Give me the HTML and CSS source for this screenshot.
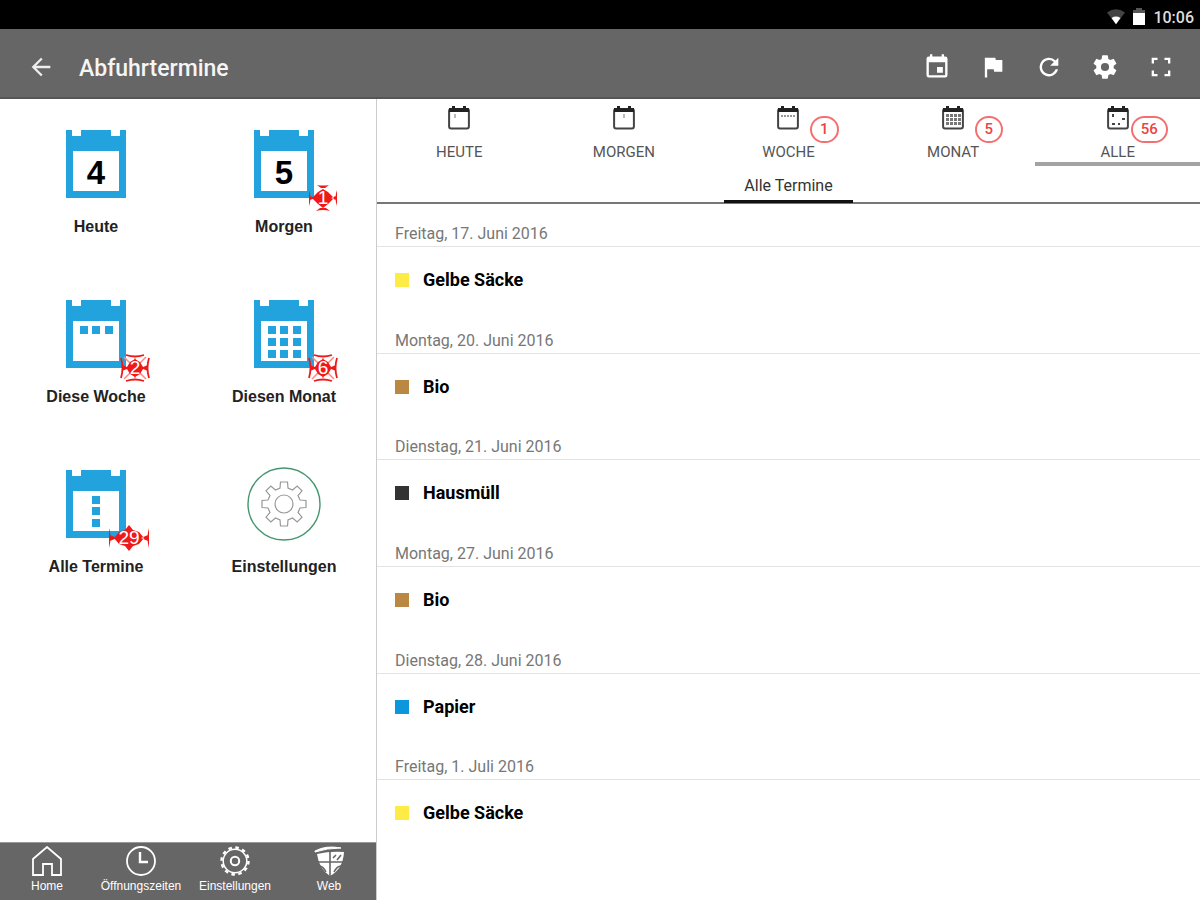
FILE: index.html
```html
<!DOCTYPE html>
<html lang="de">
<head>
<meta charset="utf-8">
<meta name="viewport" content="width=device-width, initial-scale=1">
<title>Abfuhrtermine</title>
<link rel="stylesheet" href="styles.css">
</head>
<body>
<svg class="defs" aria-hidden="true">
  <symbol id="cal" viewBox="0 0 60 68">
    <path fill="#22a3dd" fill-rule="evenodd" d="M0 0H6V6H15V0H45V6H54V0H60V68H0ZM7 21V61H53V21Z"/>
  </symbol>
  <symbol id="tabcal" viewBox="0 0 24 26">
    <rect x="2.1" y="4" width="19.8" height="19.5" rx="2" fill="none" stroke="#444" stroke-width="2"/>
    <path fill="#222" d="M2 3H5V1H8V3H16V1H19V3H22V7H2Z"/>
  </symbol>
  <symbol id="burst" viewBox="0 0 30 28">
    <path fill="#f01818" d="M15 5L20 8L26 14L20 20L15 24L10 20L4 14L10 8ZM9 1Q15 2 21 1L17 4H13ZM8 27Q15 25 22 27L18 24H12ZM1 6Q4 14 1 22ZM29 6Q26 14 29 22ZM2 12L7 14L2 16ZM28 12L23 14L28 16Z"/>
  </symbol>
  <symbol id="burst-x" viewBox="0 0 30 28">
    <path d="M1 4Q4 14 1 24M29 4Q26 14 29 24M6 1Q15 4 24 1M6 27Q15 24 24 27" fill="none" stroke="#f01818" stroke-width="1.800"/>
    <path d="M4 3L10 9M26 3L20 9M4 25L10 19M26 25L20 19M15 3V6M15 25V22" fill="none" stroke="#f88" stroke-width="1.500"/>
    <path fill="#f01818" d="M2 11L7 13L10 8L15 5L20 8L23 13L28 11V17L23 15L20 20L15 23L10 20L7 15L2 17Z"/>
  </symbol>
  <symbol id="burst-wide" viewBox="0 0 42 28">
    <path fill="#f01818" d="M21 1L25 6L31 8L36 14L31 20L25 22L21 27L17 22L11 20L6 14L11 8L17 6ZM1 4Q4 14 1 24ZM41 4Q38 14 41 24ZM2 11L9 14L2 17ZM40 11L33 14L40 17Z"/>
  </symbol>
</svg>

<div class="app">
  <div class="status">
    <svg width="18" height="18" viewBox="0 0 20 18" aria-hidden="true"><path fill="#444" d="M0 4Q10-3 20 4L10 17Z"/><path fill="#fff" d="M5 10Q10 7 15 10L10 17Z"/></svg>
    <svg width="14" height="18" viewBox="0 0 14 18" aria-hidden="true"><path fill="#555" d="M4 0H10V2H13V6H1V2H4Z"/><path fill="#fff" d="M1 5H13V17H1Z"/></svg>
    <time>10:06</time>
  </div>

  <header class="appbar">
    <button class="tool" aria-label="Zurück"><svg width="28" height="28" viewBox="0 0 24 24"><path fill="#eee" d="M20 11H7.8l5.6-5.6L12 4l-8 8 8 8 1.4-1.4L7.8 13H20z"/></svg></button>
    <h1>Abfuhrtermine</h1>
    <div class="tools">
      <button class="tool" aria-label="Kalender"><svg width="28" height="28" viewBox="0 0 24 24"><path fill="#fff" d="M17 12h-5v5h5zM16 1v2H8V1H6v2H5a2 2 0 0 0-2 2v14a2 2 0 0 0 2 2h14a2 2 0 0 0 2-2V5a2 2 0 0 0-2-2h-1V1zm3 18H5V8h14z"/></svg></button>
      <button class="tool" aria-label="Markieren"><svg width="28" height="28" viewBox="0 0 24 24"><path fill="#fff" d="M14.400 6L14 4H5v17h2v-7h5.600l.4 2h7V6z"/></svg></button>
      <button class="tool" aria-label="Aktualisieren"><svg width="28" height="28" viewBox="0 0 24 24"><path fill="#fff" d="M17.650 6.350A8 8 0 1 0 19.730 14h-2.080A6 6 0 1 1 12 6c1.660 0 3.140.69 4.220 1.780L13 11h7V4z"/></svg></button>
      <button class="tool" aria-label="Einstellungen"><svg width="28" height="28" viewBox="0 0 24 24"><path fill="#fff" d="M19.430 12.980c.04-.32.07-.64.07-.98s-.03-.66-.07-.98l2.110-1.650c.19-.15.24-.42.12-.64l-2-3.460c-.12-.22-.39-.3-.61-.22l-2.490 1c-.52-.4-1.080-.73-1.690-.98l-.38-2.650A.49.49 0 0 0 14 2h-4c-.25 0-.46.18-.49.42l-.38 2.650c-.61.25-1.170.59-1.690.98l-2.490-1c-.23-.09-.49 0-.61.22l-2 3.460c-.13.22-.07.49.12.64l2.110 1.650c-.04.32-.07.65-.07.98s.03.66.07.98l-2.110 1.650c-.19.15-.24.42-.12.64l2 3.460c.12.22.39.3.61.22l2.490-1c.52.4 1.080.73 1.690.98l.38 2.650c.03.24.24.42.49.42h4c.25 0 .46-.18.49-.42l.38-2.650c.61-.25 1.170-.59 1.690-.98l2.490 1c.23.09.49 0 .61-.22l2-3.460c.12-.22.07-.49-.12-.64zM12 15.500a3.500 3.500 0 1 1 0-7 3.500 3.500 0 0 1 0 7z"/></svg></button>
      <button class="tool" aria-label="Vollbild"><svg width="28" height="28" viewBox="0 0 24 24"><path fill="#fff" d="M4 4h5v2H6v3H4zM15 4h5v5h-2V6h-3zM4 15h2v3h3v2H4zM18 15h2v5h-5v-2h3z"/></svg></button>
    </div>
  </header>

  <div class="body">
    <aside class="side">
      <nav class="tiles" aria-label="Termine">
        <a class="tile" href="#heute"><span class="pic"><svg width="60" height="68"><use href="#cal"/></svg><b class="day">4</b></span>Heute</a>
        <a class="tile" href="#morgen"><span class="pic"><svg width="60" height="68"><use href="#cal"/></svg><b class="day">5</b><span class="burst"><svg width="30" height="28"><use href="#burst"/></svg><b>1</b></span></span>Morgen</a>
        <a class="tile" href="#woche"><span class="pic"><svg width="60" height="68"><use href="#cal"/><path fill="#22a3dd" d="M14 26h8v8h-8zM26 26h8v8h-8zM39 26h8v8h-8z"/></svg><span class="burst"><svg width="30" height="28"><use href="#burst-x"/></svg><b>2</b></span></span>Diese Woche</a>
        <a class="tile" href="#monat"><span class="pic"><svg width="60" height="68"><use href="#cal"/><path fill="#22a3dd" d="M14 26h8v8h-8zM26 26h8v8h-8zM39 26h8v8h-8zM14 38h8v8h-8zM26 38h8v8h-8zM39 38h8v8h-8zM14 50h8v8h-8zM26 50h8v8h-8zM39 50h8v8h-8z"/></svg><span class="burst"><svg width="30" height="28"><use href="#burst-x"/></svg><b>6</b></span></span>Diesen Monat</a>
        <a class="tile" href="#alle"><span class="pic"><svg width="60" height="68"><use href="#cal"/><path fill="#22a3dd" d="M26 26h8v8h-8zM26 37h8v8h-8zM26 49h8v8h-8z"/></svg><span class="burst"><svg width="42" height="28"><use href="#burst-wide"/></svg><b>29</b></span></span>Alle Termine</a>
        <a class="tile" href="#einstellungen"><span class="pic"><svg width="76" height="76" viewBox="-38 -38 76 76"><circle r="36" fill="none" stroke="#43966f" stroke-width="1.400"/><g fill="none" stroke="#999" stroke-width="1.200"><circle r="9"/><path d="M-4-16L-3.500-22H3.500L4-16L8.500-14L13.200-18L18-13.200L14-8.500L16-4L22-3.500V3.500L16 4L14 8.500L18 13.200L13.200 18L8.500 14L4 16L3.500 22H-3.500L-4 16L-8.500 14L-13.200 18L-18 13.200L-14 8.500L-16 4L-22 3.500V-3.500L-16-4L-14-8.500L-18-13.200L-13.200-18L-8.500-14Z"/></g></svg></span>Einstellungen</a>
      </nav>
      <nav class="bottom" aria-label="Hauptmenü">
        <a href="#home"><svg width="32" height="32" viewBox="0 0 32 32"><path d="M2 29V13L16 1L30 13V29H21V18H12V29Z" fill="none" stroke="#fff" stroke-width="1.800"/></svg>Home</a>
        <a href="#zeiten"><svg width="32" height="32" viewBox="0 0 32 32"><circle cx="16" cy="15" r="14" fill="none" stroke="#fff" stroke-width="1.800"/><path d="M15 6V16H23" fill="none" stroke="#fff" stroke-width="2.400"/></svg>Öffnungszeiten</a>
        <a href="#optionen"><svg width="32" height="32" viewBox="0 0 32 32"><circle cx="16" cy="15" r="13.500" fill="none" stroke="#fff" stroke-width="2.400" stroke-dasharray="3.530 3.530"/><circle cx="16" cy="15" r="11.800" fill="none" stroke="#fff" stroke-width="1.500"/><circle cx="16" cy="15" r="4.200" fill="none" stroke="#fff" stroke-width="2"/></svg>Einstellungen</a>
        <a href="#web"><svg width="32" height="32" viewBox="0 0 32 32"><path d="M2 5Q13-1 28 2Q14 2 2 6Z" fill="#fff" stroke="#fff"/><path d="M4 8Q17 5 31 6Q30 23 17 30Q6 23 4 8Z" fill="#fff"/><path d="M17 6V30M5 16H30M6 20Q10 20 13 26M28 20Q24 20 21 26M20 12L23 9M24 14L28 9" fill="none" stroke="#666" stroke-width="1.600"/></svg>Web</a>
      </nav>
    </aside>

    <main class="main">
      <nav class="tabs" aria-label="Zeitraum">
        <a href="#t1"><svg width="24" height="26"><use href="#tabcal"/><path d="M8 9V13" stroke="#777"/></svg>HEUTE</a>
        <a href="#t2"><svg width="24" height="26"><use href="#tabcal"/><path d="M12 9V13" stroke="#777"/></svg>MORGEN</a>
        <a href="#t3"><svg width="24" height="26"><use href="#tabcal"/><path d="M5 11H20" stroke="#999" stroke-width="2" stroke-dasharray="2 1"/></svg>WOCHE<span class="count">1</span></a>
        <a href="#t4"><svg width="24" height="26"><use href="#tabcal"/><path d="M5 10.500H20M5 14.500H20M5 18.500H20" stroke="#777" stroke-width="3" stroke-dasharray="3 1"/></svg>MONAT<span class="count">5</span></a>
        <a href="#t5" class="on" aria-current="page"><svg width="24" height="26"><use href="#tabcal"/><path d="M7 9V12M16 14H19M6 19H9M12 19H14" stroke="#444" stroke-width="2"/></svg>ALLE<span class="count">56</span></a>
      </nav>
      <div class="filter"><h2>Alle Termine</h2></div>
      <div class="list">
        <section><h3>Freitag, 17. Juni 2016</h3><p><i class="yellow"></i>Gelbe Säcke</p></section>
        <section><h3>Montag, 20. Juni 2016</h3><p><i class="brown"></i>Bio</p></section>
        <section><h3>Dienstag, 21. Juni 2016</h3><p><i class="black"></i>Hausmüll</p></section>
        <section><h3>Montag, 27. Juni 2016</h3><p><i class="brown"></i>Bio</p></section>
        <section><h3>Dienstag, 28. Juni 2016</h3><p><i class="blue"></i>Papier</p></section>
        <section><h3>Freitag, 1. Juli 2016</h3><p><i class="yellow"></i>Gelbe Säcke</p></section>
      </div>
    </main>
  </div>
</div>
</body>
</html>
```
FILE: styles.css
```css
* { box-sizing: border-box; }
body { margin: 0; background: #fff; color: #000; font-family: Roboto, "Liberation Sans", sans-serif; }
a { color: inherit; text-decoration: none; }
h1, h2, h3, p { margin: 0; font-weight: 400; }
svg { display: block; }
.defs { display: none; }

.app { display: flex; flex-direction: column; min-height: 100vh; }
.status { display: flex; align-items: center; justify-content: flex-end; gap: 7px; padding: 5px 6px 0 0; height: 29px; background: #000; color: #ddd; font-size: 16px; font-weight: 500; }

.appbar { display: flex; align-items: center; height: 70px; padding: 7px 25px 0 27px; background: #666; border-bottom: 2px solid #555; }
.appbar h1 { margin-left: 24px; padding-top: 4px; color: #f5f5f5; font-size: 23px; font-weight: 500; line-height: 28px; }
.tool { padding: 0; border: 0; background: none; cursor: pointer; }
.tools { display: flex; gap: 28px; margin-left: auto; }

.body { display: grid; grid-template-columns: 377fr 823fr; flex: 1; }
.side { display: flex; flex-direction: column; border-right: 1px solid #ccc; font-family: "Liberation Sans", Arial, sans-serif; }
.tiles { display: grid; grid-template-columns: 1fr 1fr; grid-auto-rows: 170px; flex: 1; padding-top: 26px; }
.tile { display: flex; flex-direction: column; align-items: center; gap: 14px; padding-left: 4px; color: #222; font-size: 16px; font-weight: 700; line-height: 20px; }
.pic { position: relative; display: grid; place-items: center; width: 76px; height: 78px; }
.day { position: absolute; top: 28px; left: 0; width: 100%; text-align: center; font-size: 33px; line-height: 40px; color: #000; }
.burst { position: absolute; right: -16px; bottom: -9px; display: grid; place-items: center; }
.burst > * { grid-area: 1 / 1; }
.burst b { color: #fff; font-size: 19px; font-weight: 400; line-height: 20px; }

.bottom { display: grid; grid-template-columns: repeat(4, 1fr); height: 58px; padding-top: 3px; background: #666; border-top: 1px solid #999; color: #fff; font-size: 12px; line-height: 16px; }
.bottom a { display: flex; flex-direction: column; align-items: center; white-space: nowrap; }

.tabs { display: grid; grid-template-columns: repeat(5, 1fr); color: #555; font-size: 15px; line-height: 20px; }
.tabs a { position: relative; display: flex; flex-direction: column; align-items: center; gap: 11px; height: 67px; padding-top: 6px; border-bottom: 4px solid transparent; }
.tabs a.on { border-color: #a3a3a3; }
.count { position: absolute; top: 17px; right: calc(50% - 50px); min-width: 27px; height: 27px; padding: 0 8px; border: 2px solid #f47070; border-radius: 14px; text-align: center; color: #ee4444; font-size: 15px; font-weight: 500; line-height: 22px; }
.filter { display: flex; justify-content: center; height: 38px; border-bottom: 2px solid #777; }
.filter h2 { height: 37px; padding: 10px 20px 0; border-bottom: 3px solid #111; color: #333; font-size: 16px; line-height: 20px; }

.main { display: flex; flex-direction: column; }
.list { display: grid; grid-auto-rows: 1fr; flex: 1; padding: 18px 0 38px; }
.list section { min-height: 106px; }
.list h3 { height: 25px; padding-left: 18px; border-bottom: 1px solid #e3e3e3; color: #777; font-size: 16px; line-height: 24px; }
.list p { display: flex; align-items: center; gap: 14px; padding: 21px 18px; font-size: 18px; font-weight: 700; line-height: 24px; }
.list i { width: 14px; height: 14px; }
.yellow { background: #ffeb45; }
.brown { background: #bb8844; }
.black { background: #333; }
.blue { background: #0c96dc; }
```
